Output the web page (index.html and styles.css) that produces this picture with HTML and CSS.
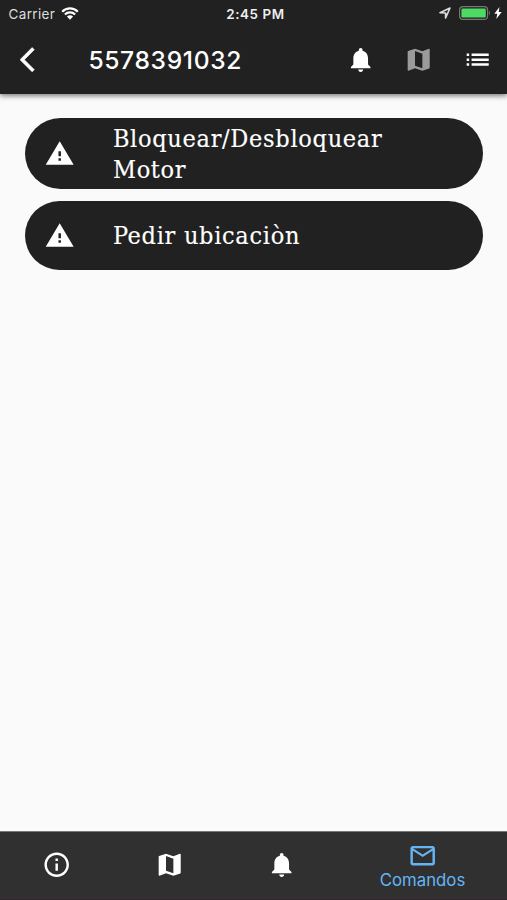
FILE: index.html
```html
<!DOCTYPE html>
<html lang="es">
<head>
<meta charset="utf-8">
<title>5578391032</title>
<link rel="stylesheet" href="styles.css">
</head>
<body>
<svg class="defs" aria-hidden="true">
  <symbol id="bell" viewBox="0 0 24 24"><path d="M12 22c1.1 0 2-.9 2-2h-4c0 1.1.89 2 2 2zm6-6v-5c0-3.07-1.64-5.64-4.5-6.32V4c0-.83-.67-1.5-1.5-1.5s-1.5.67-1.5 1.5v.68C7.63 5.36 6 7.92 6 11v5l-2 2v1h16v-1l-2-2z"/></symbol>
  <symbol id="map" viewBox="0 0 24 24"><path d="M20.500 3l-.16.03L15 5.100 9 3 3.360 4.900c-.21.07-.36.25-.36.48V20.500c0 .28.22.5.5.5l.16-.03L9 18.900l6 2.100 5.640-1.900c.21-.07.36-.25.36-.48V3.500c0-.28-.22-.5-.5-.5zM15 19l-6-2.110V5l6 2.110V19z"/></symbol>
  <symbol id="warning" viewBox="0 0 24 24"><path d="M.6 21h22.800L12 1.800.6 21zM13 17.800h-2v-2h2v2zm0-3.800h-2v-4h2v4z"/></symbol>
</svg>
<div class="screen">
  <header class="top">
    <div class="status">
      <div class="status-left"><span>Carrier</span>
        <svg class="wifi" viewBox="0 0 18 13"><path d="M1.200 4.700a11 11 0 0 1 15.600 0M3.900 7.500a7.200 7.200 0 0 1 10.200 0" fill="none" stroke="#fff" stroke-width="2.200"/><path d="M5.900 9.600a4.400 4.400 0 0 1 6.200 0L9 12.700z"/></svg>
      </div>
      <div class="time">2:45 PM</div>
      <div class="status-right">
        <svg class="locate" viewBox="0 0 12 12"><path d="M1 5.700L11 1 6.600 11V6z" fill="none" stroke="#ddd" stroke-width="1.600" stroke-linejoin="round"/></svg>
        <svg class="battery" viewBox="0 0 32 14"><rect x=".6" y=".6" width="28" height="12.800" rx="3.500" fill="none" stroke="#777" stroke-width="1.200"/><rect x="2.400" y="2.400" width="24.400" height="9.200" rx="1.400" fill="#4cd964"/><path d="M30 4.600q2 2.400 0 4.800z" fill="#777"/></svg>
        <svg class="bolt" viewBox="0 0 8 12"><path d="M5.500 0L.3 6.800h3L2.300 12 7.700 5h-3z"/></svg>
      </div>
    </div>
    <div class="appbar">
      <svg class="icon back" viewBox="0 0 24 24"><path d="M11.670 3.870L9.900 2.100 0 12l9.900 9.900 1.770-1.770L3.540 12z"/></svg>
      <h1>5578391032</h1>
      <div class="actions">
        <svg class="icon"><use href="#bell"/></svg>
        <svg class="icon dim"><use href="#map"/></svg>
        <svg class="icon" viewBox="0 0 24 24"><path d="M3 13h2v-2H3v2zm0 4h2v-2H3v2zm0-8h2V7H3v2zm4 4h14v-2H7v2zm0 4h14v-2H7v2zM7 7v2h14V7H7z"/></svg>
      </div>
    </div>
  </header>
  <main>
    <button class="command two"><svg class="icon"><use href="#warning"/></svg><span class="label">Bloquear/Desbloquear Motor</span></button>
    <button class="command"><svg class="icon"><use href="#warning"/></svg><span class="label">Pedir ubicaciòn</span></button>
  </main>
  <nav>
    <a><svg class="icon" viewBox="0 0 24 24"><path d="M11 7h2v2h-2zm0 4h2v6h-2zm1-9C6.480 2 2 6.480 2 12s4.480 10 10 10 10-4.480 10-10S17.520 2 12 2zm0 18c-4.410 0-8-3.590-8-8s3.590-8 8-8 8 3.590 8 8-3.590 8-8 8z"/></svg></a>
    <a><svg class="icon"><use href="#map"/></svg></a>
    <a><svg class="icon"><use href="#bell"/></svg></a>
    <a class="active"><svg class="icon" viewBox="0 0 24 24"><path d="M22 6c0-1.100-.9-2-2-2H4c-1.100 0-2 .9-2 2v12c0 1.100.9 2 2 2h16c1.100 0 2-.9 2-2V6zm-2 0l-8 5-8-5h16zm0 12H4V8l8 5 8-5v10z"/></svg><span>Comandos</span></a>
  </nav>
</div>
</body>
</html>
```
FILE: styles.css
```css
* { box-sizing: border-box; }
body { margin: 0; font-family: Inter, "Liberation Sans", sans-serif; color: #fff; }
.defs { position: absolute; width: 0; height: 0; }
svg { fill: #fff; flex: none; display: block; }
.icon { width: 29.4px; height: 29.4px; }
.screen { display: flex; flex-direction: column; height: 900px; background: #fafafa; overflow: hidden; }
.top { height: 94px; background: #212121; box-shadow: 0 2px 5px rgba(0, 0, 0, .5); }
.status { display: grid; grid-template-columns: 1fr auto 1fr; align-items: center; height: 25px; padding: 2px 5.500px 0 8.500px; font-size: 13.500px; }
.status-left { display: flex; align-items: center; gap: 5.500px; color: #ddd; letter-spacing: .35px; }
.wifi { width: 18px; height: 13px; margin-top: -1px; }
.time { font-weight: 600; font-size: 13.400px; letter-spacing: .6px; color: #eee; padding-left: 1px; }
.status-right { display: flex; align-items: center; justify-content: flex-end; margin-top: -1px; }
.locate { width: 12px; height: 12px; margin-right: 8px; }
.battery { width: 32px; height: 14px; margin-right: 3px; }
.bolt { width: 8px; height: 12px; }
.appbar { display: flex; align-items: center; height: 69px; padding: 0 14.400px 0 20px; }
.back { stroke: #fff; stroke-width: .5px; }
h1 { margin: 0 0 0 39px; font-size: 24.600px; font-weight: 500; letter-spacing: .65px; line-height: 30px; }
.actions { display: flex; gap: 29.400px; margin-left: auto; }
.dim { fill: #9b9b9b; }
main { flex: 1; display: flex; flex-direction: column; gap: 12px; padding: 24px 24.500px 0 25px; }
.command { display: flex; align-items: center; height: 68.500px; padding: 0 0 0 20px; border: 0; border-radius: 36px; background: #212121; color: #fff; text-align: left; font: 25px/30.500px "DejaVu Serif Condensed", "DejaVu Serif", serif; letter-spacing: .7px; }
.command.two { height: 71px; }
.label { margin-left: 38.500px; width: 300px; padding-top: 2px; -webkit-text-stroke: .15px #fff; }
nav { display: grid; grid-template-columns: repeat(3, 112.500px) 1fr; height: 69px; padding-left: .5px; background: #303030; border-top: 1px solid #777; border-bottom: 1px solid #30252c; }
nav a { display: flex; flex-direction: column; align-items: center; justify-content: center; padding-bottom: 2px; }
nav .active { color: #64b5f6; font-size: 16.800px; line-height: 20px; padding: 0; }
.active svg { fill: #64b5f6; }
```
